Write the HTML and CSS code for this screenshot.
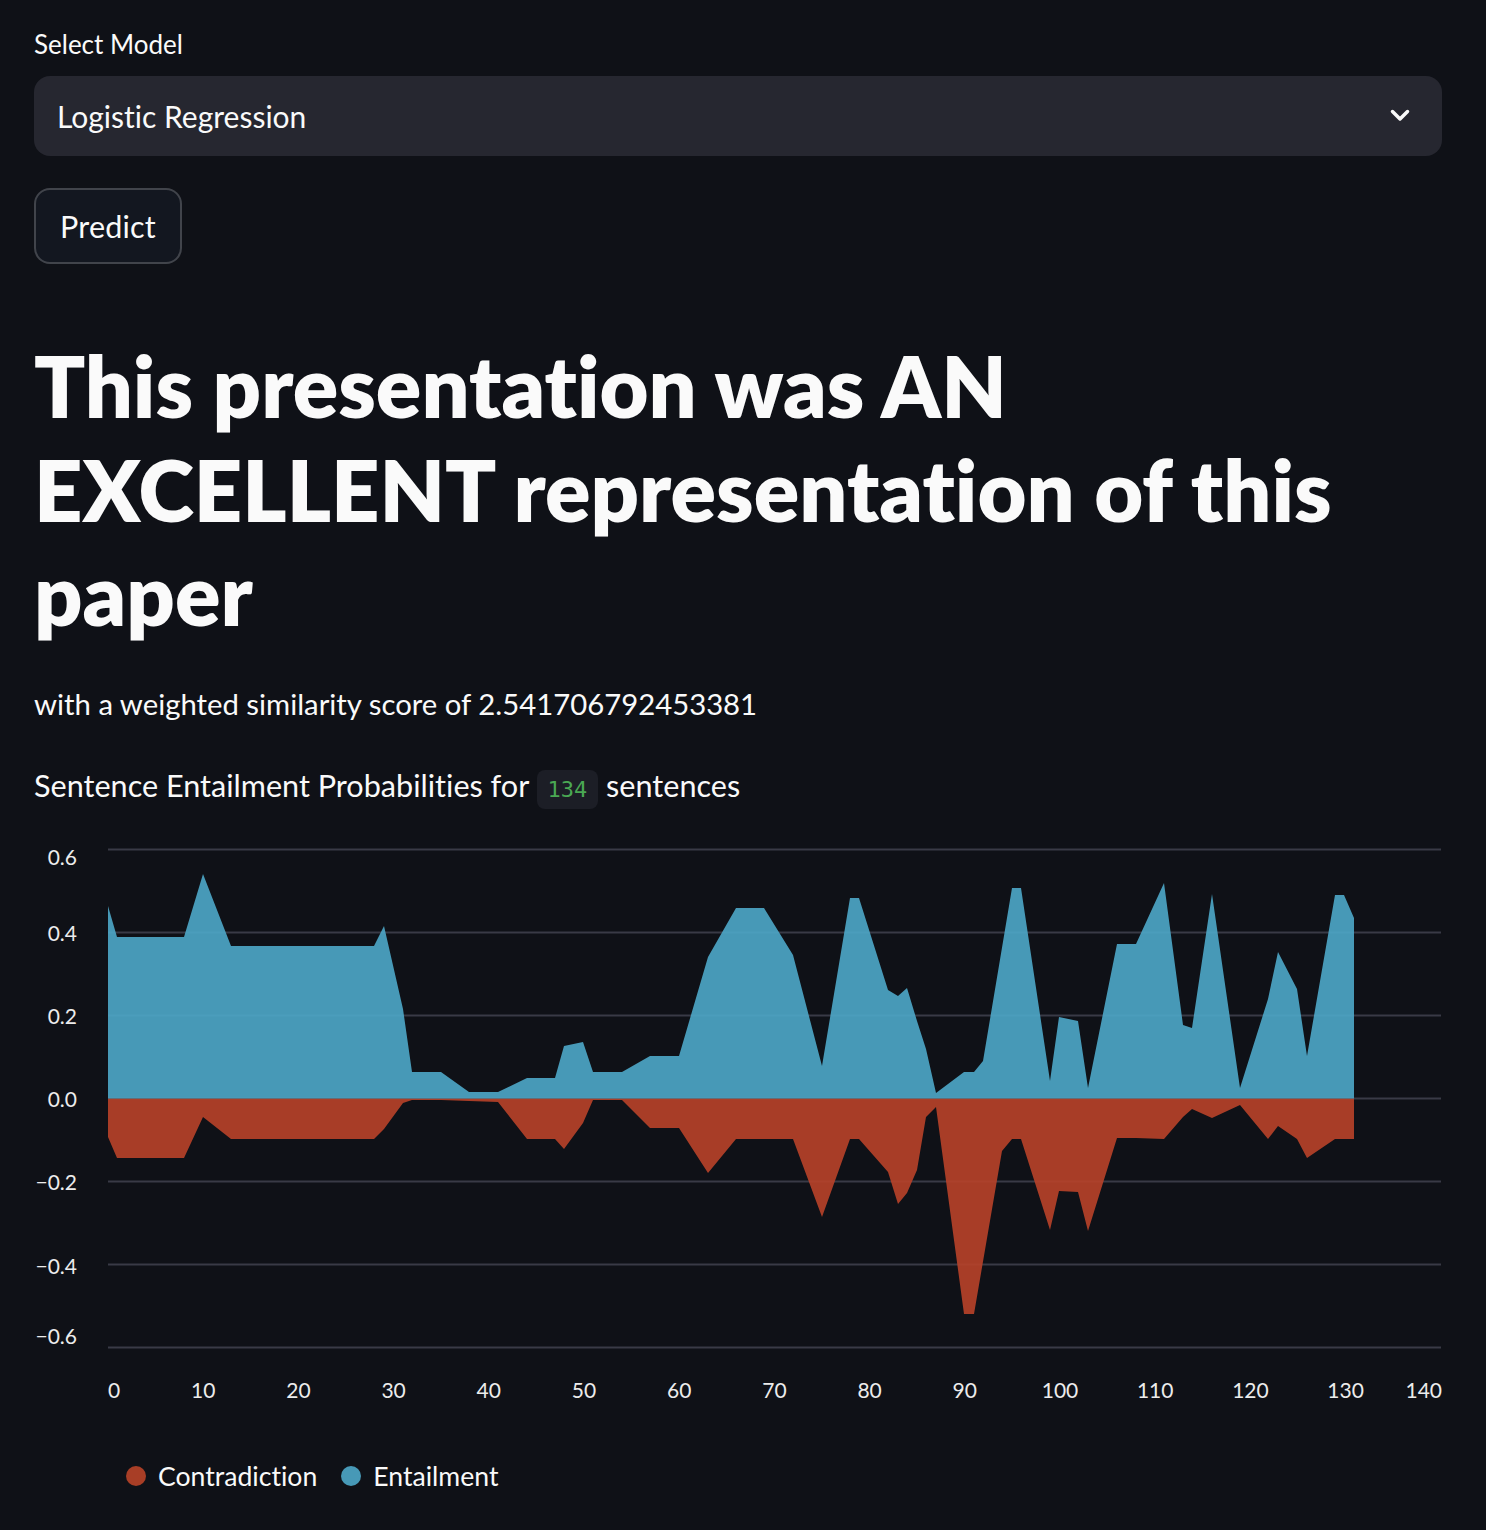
FILE: index.html
```html
<!DOCTYPE html>
<html lang="en">
<head>
<meta charset="utf-8">
<title>Presentation Evaluator</title>
<link rel="stylesheet" href="styles.css">
</head>
<body>
<main class="app">
  <label class="field-label">Select Model</label>
  <div class="select">
    <span class="select-value">Logistic Regression</span>
    <svg class="chevron" viewBox="0 0 24 24" aria-hidden="true"><path d="M4.5 7.5 L12 15 L19.5 7.5" fill="none" stroke="#fafafa" stroke-width="3.5" stroke-linecap="round" stroke-linejoin="round"/></svg>
  </div>
  <div class="actions">
    <button class="btn" type="button">Predict</button>
  </div>
  <h1 class="verdict">This presentation was AN EXCELLENT representation of this paper</h1>
  <p class="score">with a weighted similarity score of 2.541706792453381</p>
  <p class="chart-title">Sentence Entailment Probabilities for <code class="chip">134</code> sentences</p>
  <figure class="chart">
    <svg class="chart-svg" width="1408" height="590" viewBox="34 830 1408 590">
      <g class="grid">
        <line x1="108" x2="1441" y1="848.5" y2="848.5"/>
        <line x1="108" x2="1441" y1="931.5" y2="931.5"/>
        <line x1="108" x2="1441" y1="1014.5" y2="1014.5"/>
        <line x1="108" x2="1441" y1="1097.5" y2="1097.5"/>
        <line x1="108" x2="1441" y1="1180.5" y2="1180.5"/>
        <line x1="108" x2="1441" y1="1263.5" y2="1263.5"/>
        <line x1="108" x2="1441" y1="1346.5" y2="1346.5"/>
      </g>
      <polygon class="area-contra" points="108,1097.5 108,1136 117,1157 184,1157 203,1116 231,1138 374,1138 384,1128 403,1102 412,1099 441,1099 469,1100 498,1101 527,1138 555,1138 564,1148 583,1122 593,1099 622,1099 650,1127 679,1127 708,1172 736,1138 793,1138 822,1216 850,1138 859,1138 888,1171 898,1203 907,1192 917,1169 926,1116 936,1106 964,1313 974,1313 1002,1150 1012,1138 1021,1138 1050,1229 1059,1190 1078,1191 1088,1230 1117,1137 1136,1137 1164,1138 1183,1116 1192,1108 1212,1117 1240,1104 1268,1138 1278,1125 1297,1138 1307,1157 1335,1138 1354,1138 1354,1097.5"/>
      <polygon class="area-entail" points="108,1097.5 108,905 117,936 184,936 203,873 231,945 374,945 384,925 403,1008 412,1071 441,1071 469,1091 498,1091 527,1077 555,1077 564,1045 583,1041 593,1071 622,1071 650,1055 679,1055 708,956 736,907 764,907 793,954 822,1065 850,897 859,897 888,989 898,995 907,987 917,1020 926,1048 936,1092 964,1071 974,1071 983,1060 1012,887 1021,887 1050,1080 1059,1016 1078,1020 1088,1087 1117,943 1136,943 1164,882 1183,1024 1192,1027 1212,893 1240,1087 1268,998 1278,951 1297,988 1307,1055 1335,894 1344,894 1354,917 1354,1097.5"/>
      <g class="axis-label y-labels">
        <text x="77" y="864">0.6</text>
        <text x="77" y="940">0.4</text>
        <text x="77" y="1022.5">0.2</text>
        <text x="77" y="1106">0.0</text>
        <text x="77" y="1189">−0.2</text>
        <text x="77" y="1273">−0.4</text>
        <text x="77" y="1343">−0.6</text>
      </g>
      <g class="axis-label x-labels">
        <text x="108" y="1397" class="flush-start">0</text>
        <text x="203.2" y="1397">10</text>
        <text x="298.4" y="1397">20</text>
        <text x="393.6" y="1397">30</text>
        <text x="488.8" y="1397">40</text>
        <text x="584" y="1397">50</text>
        <text x="679.2" y="1397">60</text>
        <text x="774.4" y="1397">70</text>
        <text x="869.6" y="1397">80</text>
        <text x="964.8" y="1397">90</text>
        <text x="1060" y="1397">100</text>
        <text x="1155.2" y="1397">110</text>
        <text x="1250.4" y="1397">120</text>
        <text x="1345.6" y="1397">130</text>
        <text x="1442" y="1397" class="flush-end">140</text>
      </g>
    </svg>
    <div class="legend">
      <span class="legend-item"><span class="dot dot-contra"></span>Contradiction</span>
      <span class="legend-item"><span class="dot dot-entail"></span>Entailment</span>
    </div>
  </figure>
</main>
</body>
</html>
```

FILE: styles.css
```css
* { box-sizing: border-box; }

html, body {
  margin: 0;
  background: #0f1117;
}

body {
  font-family: Lato, "Noto Sans", sans-serif;
  font-variant-ligatures: none;
  font-feature-settings: "liga" 0, "clig" 0;
  color: #fafafa;
}

.app {
  padding: 26px 44px 40px 34px;
}

.field-label {
  display: block;
  font-size: 26px;
  line-height: 36px;
}

.select {
  margin-top: 14px;
  height: 80px;
  background: #262730;
  border-radius: 16px;
  display: flex;
  align-items: center;
  justify-content: space-between;
  padding: 0 30px 0 23px;
}

.select-value {
  font-size: 30px;
  line-height: 36px;
}

.chevron {
  width: 24px;
  height: 24px;
  display: block;
}

.actions {
  margin-top: 32px;
  display: flex;
}

.btn {
  display: inline-flex;
  align-items: center;
  height: 76px;
  padding: 0 24px;
  background: #131720;
  border: 2px solid rgba(250, 250, 250, 0.2);
  border-radius: 16px;
  color: #fafafa;
  font-family: inherit;
  font-size: 30.5px;
  line-height: 36px;
  letter-spacing: 0.2px;
}

.verdict {
  margin: 70px 0 0;
  font-size: 84.5px;
  line-height: 104px;
  font-weight: 800;
}

.score {
  margin: 38px 0 0;
  font-size: 29.3px;
  line-height: 40px;
}

.chart-title {
  margin: 42px 0 0;
  font-size: 30.6px;
  line-height: 40px;
}

.chip {
  display: inline-block;
  font-family: "DejaVu Sans Mono", monospace;
  font-size: 22px;
  line-height: 29px;
  padding: 5px 11px;
  border-radius: 8px;
  background: #1c1e26;
  color: #4aa853;
  vertical-align: baseline;
}

.chart {
  margin: 21.5px 0 0;
}

.chart-svg {
  display: block;
}

.grid line {
  stroke: #393a46;
  stroke-width: 2;
}

.area-entail {
  fill: #4ea9c9;
  fill-opacity: 0.9;
}

.area-contra {
  fill: #b94329;
  fill-opacity: 0.9;
}

.axis-label text {
  fill: #ececec;
  font-family: Lato, "Noto Sans", sans-serif;
  font-size: 21px;
}

.y-labels text {
  text-anchor: end;
}

.x-labels text {
  text-anchor: middle;
}

.x-labels .flush-start {
  text-anchor: start;
}

.x-labels .flush-end {
  text-anchor: end;
}

.legend {
  margin-top: 35px;
  height: 40px;
  display: flex;
  align-items: center;
  padding-left: 92px;
  font-size: 26.6px;
}

.legend-item {
  display: flex;
  align-items: center;
  gap: 12px;
  margin-right: 24px;
}

.dot {
  width: 20px;
  height: 20px;
  border-radius: 50%;
}

.dot-contra {
  background: #a83e26;
}

.dot-entail {
  background: #4799b7;
}
```
